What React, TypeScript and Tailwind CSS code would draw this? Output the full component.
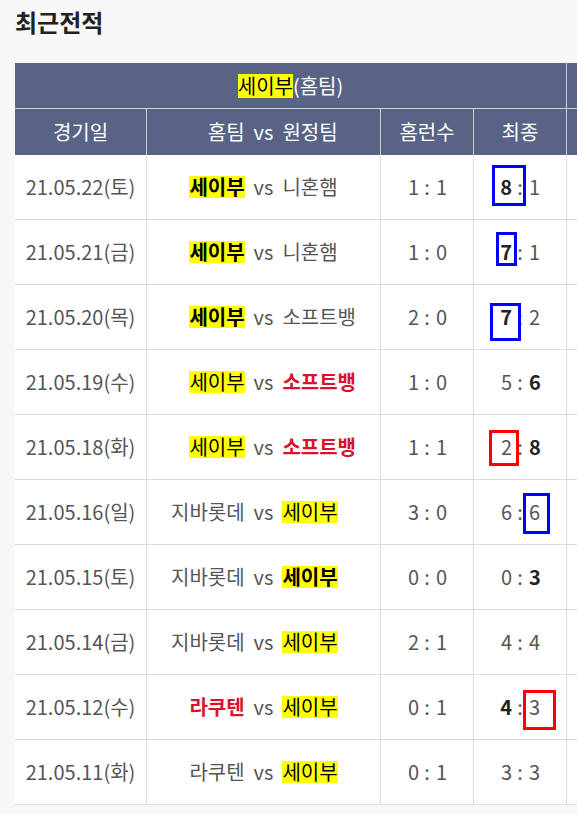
import type { ReactNode } from "react";

type Team = { name: string; bold?: boolean; seibu?: boolean; red?: boolean };
type Box = { color: "blue" | "red"; left: number; top: number; w: number; h: number };
type Row = {
  date: string;
  home: Team;
  away: Team;
  hr: [string, string];
  score: [string, string];
  boldSide?: "l" | "r";
  box?: Box;
};

// 세이부 기준 최근 10경기
const ROWS: Row[] = [
  { date: "21.05.22(토)", home: { name: "세이부", bold: true, seibu: true }, away: { name: "니혼햄" }, hr: ["1", "1"], score: ["8", "1"], boldSide: "l", box: { color: "blue", left: 18, top: 10, w: 34, h: 41 } },
  { date: "21.05.21(금)", home: { name: "세이부", bold: true, seibu: true }, away: { name: "니혼햄" }, hr: ["1", "0"], score: ["7", "1"], boldSide: "l", box: { color: "blue", left: 22, top: 12, w: 21, h: 34 } },
  { date: "21.05.20(목)", home: { name: "세이부", bold: true, seibu: true }, away: { name: "소프트뱅" }, hr: ["2", "0"], score: ["7", "2"], boldSide: "l", box: { color: "blue", left: 16, top: 18, w: 31, h: 38 } },
  { date: "21.05.19(수)", home: { name: "세이부", seibu: true }, away: { name: "소프트뱅", bold: true, red: true }, hr: ["1", "0"], score: ["5", "6"], boldSide: "r" },
  { date: "21.05.18(화)", home: { name: "세이부", seibu: true }, away: { name: "소프트뱅", bold: true, red: true }, hr: ["1", "1"], score: ["2", "8"], boldSide: "r", box: { color: "red", left: 15, top: 15, w: 30, h: 36 } },
  { date: "21.05.16(일)", home: { name: "지바롯데" }, away: { name: "세이부", seibu: true }, hr: ["3", "0"], score: ["6", "6"], box: { color: "blue", left: 49, top: 13, w: 27, h: 41 } },
  { date: "21.05.15(토)", home: { name: "지바롯데" }, away: { name: "세이부", bold: true, seibu: true }, hr: ["0", "0"], score: ["0", "3"], boldSide: "r" },
  { date: "21.05.14(금)", home: { name: "지바롯데" }, away: { name: "세이부", seibu: true }, hr: ["2", "1"], score: ["4", "4"] },
  { date: "21.05.12(수)", home: { name: "라쿠텐", bold: true, red: true }, away: { name: "세이부", seibu: true }, hr: ["0", "1"], score: ["4", "3"], boldSide: "l", box: { color: "red", left: 49, top: 15, w: 33, h: 40 } },
  { date: "21.05.11(화)", home: { name: "라쿠텐" }, away: { name: "세이부", seibu: true }, hr: ["0", "1"], score: ["3", "3"] },
];

function TeamName({ t }: { t: Team }) {
  if (t.seibu) {
    return (
      <span className={`inline-block bg-[#ffff00] leading-[22px] text-black ${t.bold ? "font-bold" : ""}`}>
        {t.name}
      </span>
    );
  }
  if (t.red) {
    return <span className="font-bold text-[#d8132b]">{t.name}</span>;
  }
  return <span>{t.name}</span>;
}

function Cell({ children, className = "" }: { children?: ReactNode; className?: string }) {
  return (
    <div className={`flex items-center justify-center border-r border-b border-[#dddddd] ${className}`}>
      {children}
    </div>
  );
}

// 왼쪽 팀은 오른쪽 정렬, 오른쪽 팀은 왼쪽 정렬 → "vs"가 항상 가운데 고정
function VsLine({ left, right }: { left: ReactNode; right: ReactNode }) {
  return (
    <div className="grid w-full grid-cols-[1fr_auto_1fr] items-center">
      <div className="justify-self-end">{left}</div>
      <span className="mx-[9px]">vs</span>
      <div className="justify-self-start">{right}</div>
    </div>
  );
}

// "a : b" — 콜론을 칸 가운데에 고정
function Pair({ l, r, boldSide }: { l: string; r: string; boldSide?: "l" | "r" }) {
  return (
    <div className="grid w-full grid-cols-[1fr_12px_1fr] items-center">
      <span className={`pr-[2px] text-right ${boldSide === "l" ? "font-bold text-[#222]" : ""}`}>{l}</span>
      <span className="text-center">:</span>
      <span className={`pl-[3px] text-left ${boldSide === "r" ? "font-bold text-[#222]" : ""}`}>{r}</span>
    </div>
  );
}

function ScoreCell({ row }: { row: Row }) {
  return (
    <Cell className="relative">
      <Pair l={row.score[0]} r={row.score[1]} boldSide={row.boldSide} />
      {row.box && (
        <span
          className={`absolute border-[3px] ${row.box.color === "blue" ? "border-[#0000ff]" : "border-[#ff0000]"}`}
          style={{ left: row.box.left, top: row.box.top, width: row.box.w, height: row.box.h }}
        />
      )}
    </Cell>
  );
}

export default function App() {
  return (
    <div
      className="min-h-screen w-full overflow-hidden bg-[#f8f8f8] pl-[15px] text-[20px] text-[#555555]"
      style={{ fontFamily: '"Noto Sans CJK KR", "Noto Sans", sans-serif' }}
    >
      <h2 className="pt-[5px] pb-[25px] text-[24px] leading-[33px] font-bold text-[#222]">최근전적</h2>

      <div className="w-[660px]">
        {/* 헤더 1줄 */}
        <div className="grid h-[46px] grid-cols-[552px_108px] border-b border-[#d0d0d0] bg-[#596386] text-white">
          <div className="flex items-center justify-center border-r border-[#d0d0d0]">
            <span className="inline-block bg-[#ffff00] leading-[24px] text-black">세이부</span>
            <span>(홈팀)</span>
          </div>
          <div className="flex items-center justify-center">원정</div>
        </div>

        {/* 헤더 2줄 */}
        <div className="grid h-[46px] grid-cols-[132px_234px_93px_93px_108px] bg-[#596386] text-white">
          <div className="flex items-center justify-center border-r border-[#d0d0d0]">경기일</div>
          <div className="flex items-center border-r border-[#d0d0d0]">
            <VsLine left="홈팀" right="원정팀" />
          </div>
          <div className="flex items-center justify-center border-r border-[#d0d0d0]">홈런수</div>
          <div className="flex items-center justify-center border-r border-[#d0d0d0]">최종</div>
          <div className="flex items-center justify-center">비고</div>
        </div>

        {ROWS.map((row) => (
          <div key={row.date} className="grid h-[65px] grid-cols-[132px_234px_93px_93px_108px] bg-white">
            <Cell>{row.date}</Cell>
            <Cell>
              <VsLine left={<TeamName t={row.home} />} right={<TeamName t={row.away} />} />
            </Cell>
            <Cell>
              <Pair l={row.hr[0]} r={row.hr[1]} />
            </Cell>
            <ScoreCell row={row} />
            <div className="flex items-center border-b border-[#dddddd] pl-[9px] text-[#e39200]">1위</div>
          </div>
        ))}
      </div>
    </div>
  );
}
